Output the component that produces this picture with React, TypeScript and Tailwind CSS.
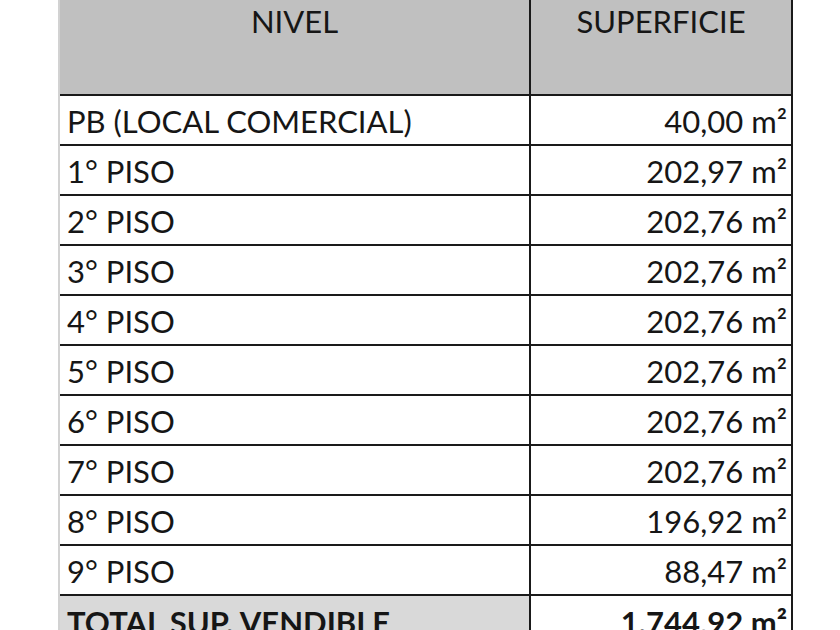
import React from "react";

const rows = [
  { nivel: "PB (LOCAL COMERCIAL)", sup: "40,00" },
  { nivel: "1° PISO", sup: "202,97" },
  { nivel: "2° PISO", sup: "202,76" },
  { nivel: "3° PISO", sup: "202,76" },
  { nivel: "4° PISO", sup: "202,76" },
  { nivel: "5° PISO", sup: "202,76" },
  { nivel: "6° PISO", sup: "202,76" },
  { nivel: "7° PISO", sup: "202,76" },
  { nivel: "8° PISO", sup: "196,92" },
  { nivel: "9° PISO", sup: "88,47" },
];

function App() {
  return (
    <div
      className="w-[840px] h-[630px] bg-white overflow-hidden text-[#161616] text-[31px]"
      style={{ fontFamily: "Lato, 'Open Sans', sans-serif" }}
    >
      <div className="ml-[58px] w-[735px] border-l-2 border-l-[#d2d2d2] border-r-2 border-r-[#1a1a1a]">
        {/* header */}
        <div className="flex h-[96px] bg-[#c0c0c0] border-b-2 border-[#1a1a1a]">
          <div className="w-[471px] border-r-2 border-[#1a1a1a] flex justify-center pt-[2px] leading-[38px]">
            NIVEL
          </div>
          <div className="flex-1 flex justify-center pt-[2px] leading-[38px]">
            SUPERFICIE
          </div>
        </div>

        {rows.map((r) => (
          <div key={r.nivel} className="flex h-[50px] border-b-2 border-[#1a1a1a]">
            <div className="w-[471px] border-r-2 border-[#1a1a1a] flex items-center pl-[7px] pt-[2px]">
              {r.nivel}
            </div>
            <div className="flex-1 flex items-center justify-end pr-[4px] pt-[2px]">
              {r.sup} m²
            </div>
          </div>
        ))}

        {/* total */}
        <div className="flex h-[50px] font-bold">
          <div className="w-[471px] border-r-2 border-[#1a1a1a] bg-[#d9d9d9] flex items-center pl-[7px] pt-[2px]">
            TOTAL SUP. VENDIBLE
          </div>
          <div className="flex-1 flex items-center justify-end pr-[4px] pt-[2px]">
            1.744,92 m²
          </div>
        </div>
      </div>
    </div>
  );
}

export default App;
